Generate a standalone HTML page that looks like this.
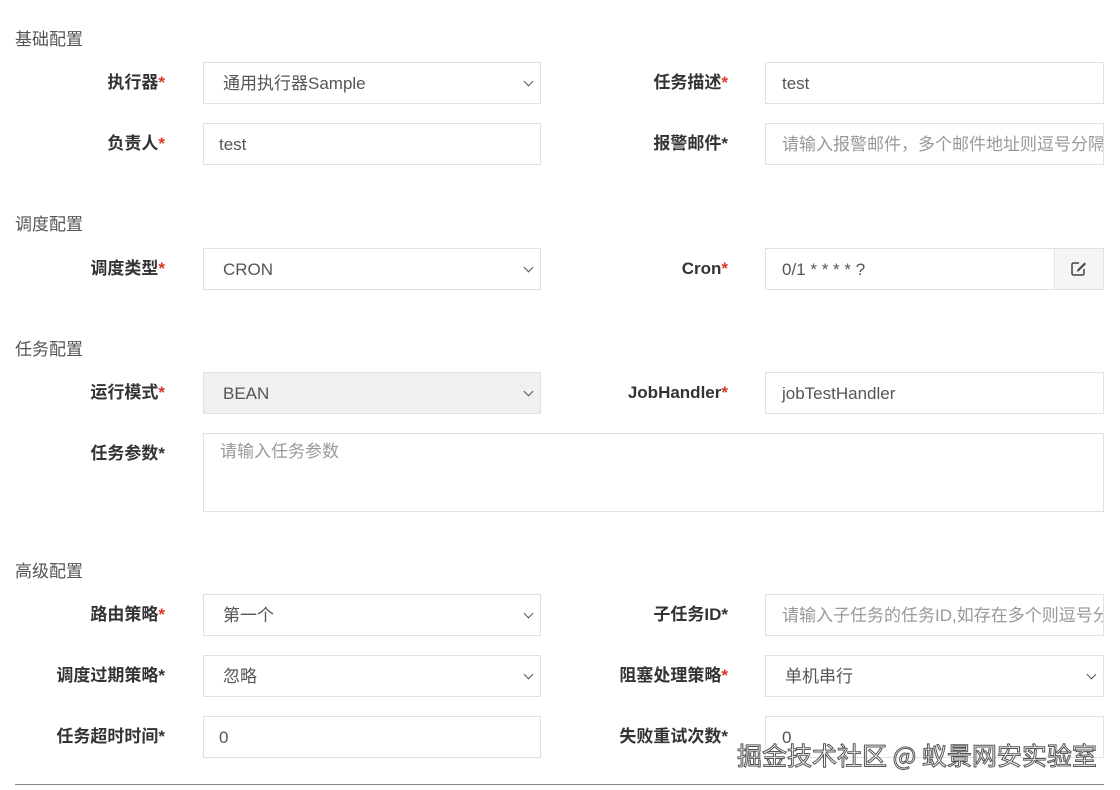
<!DOCTYPE html>
<html><head><meta charset="utf-8"><style>
body{margin:0;width:1120px;height:790px;background:#fff;font-family:"Liberation Sans","Noto Sans CJK SC",sans-serif;position:relative;overflow:hidden;color:#333}
.h{position:absolute;left:15px;font-size:17px;color:#555}
.l{position:absolute;font-size:17px;font-weight:bold;color:#333;text-align:right;line-height:42px;height:42px}
.l i{font-style:normal;color:#d73925}
.f{position:absolute;box-sizing:border-box;border:1px solid #dfe1e4;height:42px;line-height:41px;padding-left:19px;font-size:17px;color:#555;background:#fff}
.ph{color:#999;white-space:nowrap;overflow:hidden}
.sel::after{content:"";position:absolute;right:8px;top:15px;width:6px;height:6px;border-right:1.3px solid #555;border-bottom:1.3px solid #555;transform:rotate(45deg)}
.L{left:0;width:165px}.R{left:560px;width:168px}
.FL{left:203px;width:338px}.FR{left:765px;width:339px}
</style></head><body>
<div class="h" style="top:25px">基础配置</div>
<div class="l L" style="top:62px">执行器<i>*</i></div>
<div class="f FL sel" style="top:62px">通用执行器Sample</div>
<div class="l R" style="top:62px">任务描述<i>*</i></div>
<div class="f FR" style="top:62px;padding-left:16px">test</div>
<div class="l L" style="top:123px">负责人<i>*</i></div>
<div class="f FL" style="top:123px;padding-left:15px">test</div>
<div class="l R" style="top:123px">报警邮件*</div>
<div class="f FR ph" style="top:123px;padding-left:16px">请输入报警邮件，多个邮件地址则逗号分隔</div>

<div class="h" style="top:210px">调度配置</div>
<div class="l L" style="top:248px">调度类型<i>*</i></div>
<div class="f FL sel" style="top:248px">CRON</div>
<div class="l R" style="top:248px">Cron<i>*</i></div>
<div class="f FR" style="top:248px;padding-left:16px">0/1 * * * * ?<div style="position:absolute;right:0;top:0;width:48px;height:40px;background:#f4f5f5;border-left:1px solid #e5e5e5">
<svg width="18" height="18" viewBox="0 0 18 18" style="position:absolute;left:15px;top:11px"><path d="M9 3H3.5A1.5 1.5 0 0 0 2 4.5v9A1.5 1.5 0 0 0 3.5 15h9a1.5 1.5 0 0 0 1.5-1.5V9" fill="none" stroke="#444" stroke-width="1.5"/><path d="M14.5 2.5l1.5 1.5-7 7-2.2.7.7-2.2z" fill="#444"/></svg></div></div>

<div class="h" style="top:335px">任务配置</div>
<div class="l L" style="top:372px">运行模式<i>*</i></div>
<div class="f FL sel" style="top:372px;background:#eef1f0">BEAN</div>
<div class="l R" style="top:372px">JobHandler<i>*</i></div>
<div class="f FR" style="top:372px;padding-left:16px">jobTestHandler</div>
<div class="l L" style="top:433px">任务参数*</div>
<div class="f ph" style="top:433px;left:203px;width:901px;height:79px;line-height:36px;padding-left:16px">请输入任务参数</div>

<div class="h" style="top:557px">高级配置</div>
<div class="l L" style="top:594px">路由策略<i>*</i></div>
<div class="f FL sel" style="top:594px">第一个</div>
<div class="l R" style="top:594px">子任务ID*</div>
<div class="f FR ph" style="top:594px;padding-left:16px">请输入子任务的任务ID,如存在多个则逗号分隔</div>
<div class="l L" style="top:655px">调度过期策略*</div>
<div class="f FL sel" style="top:655px">忽略</div>
<div class="l R" style="top:655px">阻塞处理策略<i>*</i></div>
<div class="f FR sel" style="top:655px">单机串行</div>
<div class="l L" style="top:716px">任务超时时间*</div>
<div class="f FL" style="top:716px;padding-left:15px">0</div>
<div class="l R" style="top:716px">失败重试次数*</div>
<div class="f FR" style="top:716px;padding-left:16px;line-height:42px">0</div>
<div style="position:absolute;left:737px;top:737px;font-size:25px;color:#fff;-webkit-text-stroke:1px #555;font-family:'Noto Sans CJK SC',sans-serif;white-space:nowrap">掘金技术社区 @ 蚁景网安实验室</div>
<div style="position:absolute;left:15px;top:784px;width:1089px;height:1px;background:#888"></div>
</body></html>
